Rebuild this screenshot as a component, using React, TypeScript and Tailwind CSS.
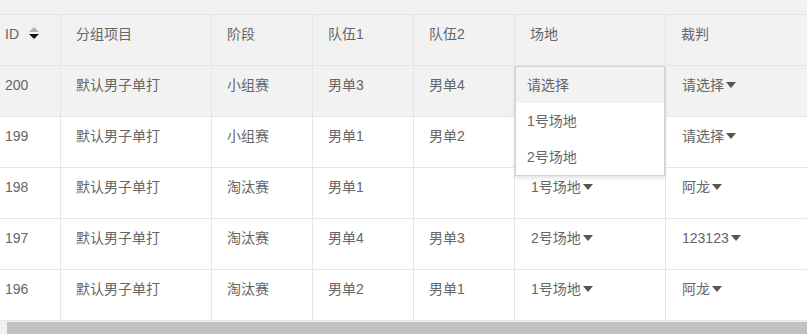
import React from 'react';

type Row = {
  id: number;
  group: string;
  stage: string;
  team1: string;
  team2: string;
  venue: string;
  referee: string;
};

const rows: Row[] = [
  { id: 200, group: '默认男子单打', stage: '小组赛', team1: '男单3', team2: '男单4', venue: '', referee: '请选择' },
  { id: 199, group: '默认男子单打', stage: '小组赛', team1: '男单1', team2: '男单2', venue: '请选择', referee: '请选择' },
  { id: 198, group: '默认男子单打', stage: '淘汰赛', team1: '男单1', team2: '', venue: '1号场地', referee: '阿龙' },
  { id: 197, group: '默认男子单打', stage: '淘汰赛', team1: '男单4', team2: '男单3', venue: '2号场地', referee: '123123' },
  { id: 196, group: '默认男子单打', stage: '淘汰赛', team1: '男单2', team2: '男单1', venue: '1号场地', referee: '阿龙' },
];

const widths = ['w-[71px]', 'w-[151px]', 'w-[101px]', 'w-[101px]', 'w-[101px]', 'w-[151px]', 'w-[160px]'];

const Caret = () => (
  <span className="ml-[2px] inline-block h-0 w-0 border-x-[5px] border-t-[6px] border-x-transparent border-t-[#555]" />
);

const SelectText = ({ text }: { text: string }) => (
  <div className="flex items-center pl-px">
    <span>{text}</span>
    <Caret />
  </div>
);

const Cell = ({ col, children, className = '' }: { col: number; children?: React.ReactNode; className?: string }) => (
  <div className={`${widths[col]} shrink-0 border-r border-[#e6e6e6] px-[15px] pt-[9px] leading-5 ${className}`}>
    {children}
  </div>
);

const VenueDropdown = () => (
  <div className="absolute left-0 top-0 z-10 w-[150px] border border-[#d2d2d2] bg-white shadow-[0_2px_4px_rgba(0,0,0,0.12)]">
    {['请选择', '1号场地', '2号场地'].map((opt, i) => (
      <div key={opt} className={`flex h-[36px] items-center pl-[11px] ${i === 0 ? 'bg-[#f2f2f2]' : ''}`}>
        {opt}
      </div>
    ))}
  </div>
);

export default function App() {
  const headers = ['分组项目', '阶段', '队伍1', '队伍2', '场地', '裁判'];

  return (
    <div
      className="h-[334px] w-[807px] overflow-hidden bg-white text-sm text-[#666]"
      style={{ fontFamily: '"Liberation Sans", "Noto Sans CJK SC", sans-serif' }}
    >
      <div className="h-[15px] border-b border-[#e6e6e6] bg-[#f2f2f2]" />

      <div className="-ml-[10px]">
        {/* Header */}
        <div className="flex h-[51px] border-b border-[#e6e6e6] bg-[#f2f2f2]">
          <Cell col={0} className="flex items-start">
            <span>ID</span>
            <span className="ml-[10px] mt-[3px] flex flex-col items-center gap-[2px]">
              <span className="h-0 w-0 border-x-[5px] border-b-[5px] border-x-transparent border-b-[#b2b2b2]" />
              <span className="h-0 w-0 border-x-[5px] border-t-[5px] border-x-transparent border-t-[#111]" />
            </span>
          </Cell>
          {headers.map((h, i) => (
            <Cell key={h} col={i + 1}>
              {h}
            </Cell>
          ))}
        </div>

        {/* Body */}
        {rows.map((r, idx) => (
          <div
            key={r.id}
            className={`flex h-[51px] border-b border-[#e6e6e6] ${idx === 0 ? 'bg-[#f2f2f2]' : 'bg-white'}`}
          >
            <Cell col={0}>{r.id}</Cell>
            <Cell col={1}>{r.group}</Cell>
            <Cell col={2}>{r.stage}</Cell>
            <Cell col={3}>{r.team1}</Cell>
            <Cell col={4}>{r.team2}</Cell>
            <Cell col={5} className="relative">
              {idx === 0 ? <VenueDropdown /> : <SelectText text={r.venue} />}
            </Cell>
            <Cell col={6}>
              <SelectText text={r.referee} />
            </Cell>
          </div>
        ))}
      </div>

      {/* horizontal scrollbar */}
      <div className="h-[13px] bg-[#f1f1f1] pl-[7px] pt-px">
        <div className="h-full bg-[#c1c1c1]" />
      </div>
    </div>
  );
}
